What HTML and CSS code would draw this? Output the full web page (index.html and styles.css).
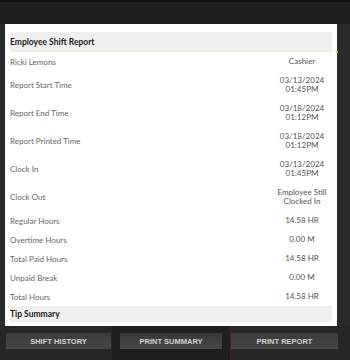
FILE: index.html
```html
<!DOCTYPE html>
<html lang="en">
<head>
  <meta charset="UTF-8">
  <title>Employee Shift Report</title>
  <link rel="stylesheet" href="styles.css">
</head>
<body>

<div class="topbar"></div>

<div class="card">
  <div class="section-head">Employee Shift Report</div>

  <div class="row"><span class="label">Ricki Lemons</span><span class="value">Cashier</span></div>
  <div class="row tall"><span class="label">Report Start Time</span><span class="value">03/13/2024<br>01:45PM</span></div>
  <div class="row tall"><span class="label">Report End Time</span><span class="value">03/18/2024<br>01:12PM</span></div>
  <div class="row tall"><span class="label">Report Printed Time</span><span class="value">03/18/2024<br>01:12PM</span></div>
  <div class="row tall"><span class="label">Clock In</span><span class="value">03/13/2024<br>01:45PM</span></div>
  <div class="row tall"><span class="label">Clock Out</span><span class="value">Employee Still<br>Clocked In</span></div>
  <div class="row"><span class="label">Regular Hours</span><span class="value">14.58 HR</span></div>
  <div class="row"><span class="label">Overtime Hours</span><span class="value">0.00 M</span></div>
  <div class="row"><span class="label">Total Paid Hours</span><span class="value">14.58 HR</span></div>
  <div class="row"><span class="label">Unpaid Break</span><span class="value">0.00 M</span></div>
  <div class="row"><span class="label">Total Hours</span><span class="value">14.58 HR</span></div>

  <div class="section-head tip">Tip Summary</div>
</div>

<!-- botones de abajo -->
<div class="footer">
  <button class="btn btn-left">Shift History</button>
  <div class="active-frame">
    <button class="btn">Print Summary</button>
  </div>
  <button class="btn btn-right">Print Report</button>
</div>

</body>
</html>
```

FILE: styles.css
```css
body {
  margin: 0;
  width: 350px;
  height: 360px;
  overflow: hidden;
  background: #2a2a2a;
  font-family: "Lato", "Liberation Sans", sans-serif;
  display: flex;
  flex-direction: column;
}

.topbar {
  height: 22px;
  border-top: 2px solid #111;
  background: #1f1f1f;
}

.card {
  width: 322px;
  margin-left: 5px;
  padding: 8px 5px 4px;
  background: #fff;
}

.section-head {
  position: relative;
  height: 19px;
  padding-left: 0;
  display: flex;
  align-items: center;
  background: #f0f0f0;
  border-bottom: 1px solid #f0efcf;
  font-size: 8.5px;
  font-weight: bold;
  color: #222;
}

.section-head:first-child::after {
  content: "";
  position: absolute;
  right: -6px;
  bottom: -2px;
  width: 2px;
  height: 2px;
  background: #e6d800;
}

.section-head.tip {
  height: 16px;
  border-bottom: none;
}

.row {
  height: 19px;
  display: flex;
  align-items: center;
  justify-content: space-between;
  font-size: 8px;
}

.row.tall {
  height: 28px;
}

.label {
  color: #666;
}

.value {
  width: 60px;
  text-align: center;
  color: #555;
  line-height: 9px;
}

.footer {
  flex: 1;
  display: flex;
  align-items: flex-start;
  padding-left: 6px;
  background: #272727;
}

.btn {
  height: 16px;
  margin-top: 7px;
  border: none;
  background: linear-gradient(#3a3a3a, #474747);
  color: #d2d2d2;
  font-family: "Liberation Sans", sans-serif;
  font-size: 7.5px;
  font-weight: bold;
  text-transform: uppercase;
  padding: 0;
}

.btn-left {
  width: 105px;
  margin-right: 1px;
}

.active-frame {
  align-self: stretch;
  width: 102px;
  padding: 0 8px;
  background: #1e1e1e;
  border-right: 1px solid #4a2020;
}

.active-frame .btn {
  width: 102px;
}

.btn-right {
  width: 107px;
}
```
